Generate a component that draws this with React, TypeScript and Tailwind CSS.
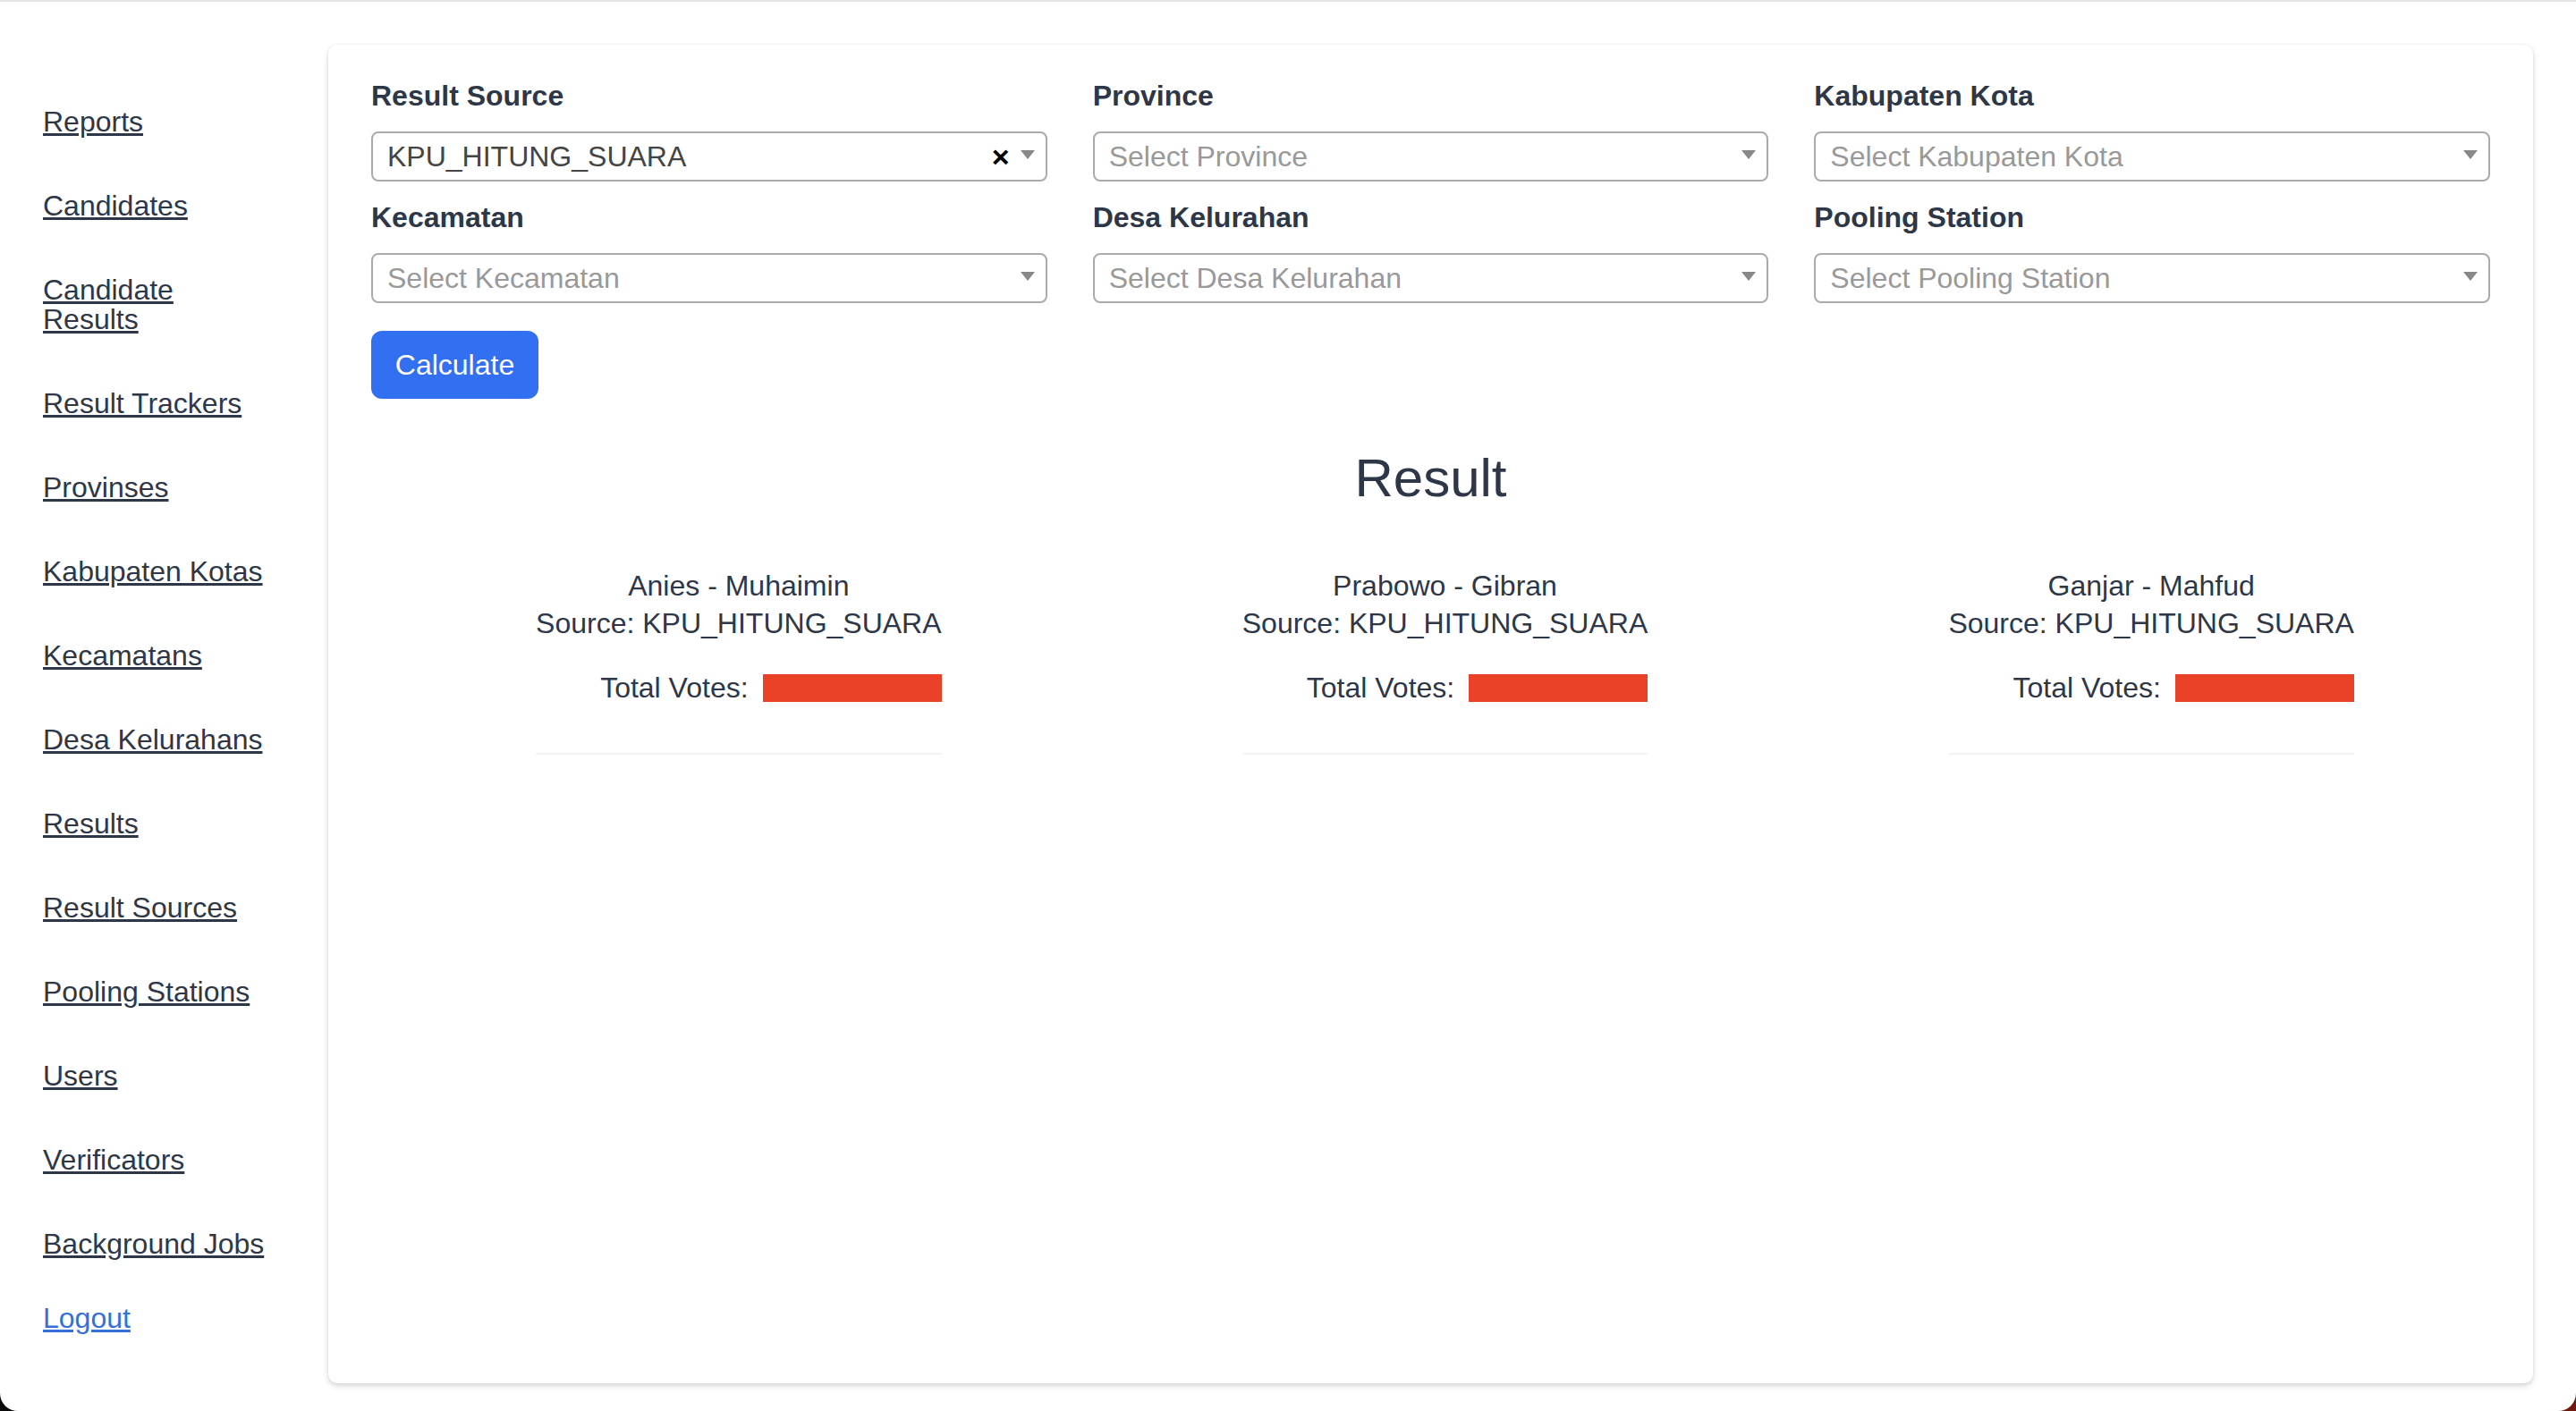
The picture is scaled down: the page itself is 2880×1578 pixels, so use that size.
import React from 'react';

const links = [
  'Reports',
  'Candidates',
  'Candidate Results',
  'Result Trackers',
  'Provinses',
  'Kabupaten Kotas',
  'Kecamatans',
  'Desa Kelurahans',
  'Results',
  'Result Sources',
  'Pooling Stations',
  'Users',
  'Verificators',
  'Background Jobs',
];

const filters = [
  { label: 'Result Source', value: 'KPU_HITUNG_SUARA', placeholder: '' },
  { label: 'Province', value: '', placeholder: 'Select Province' },
  { label: 'Kabupaten Kota', value: '', placeholder: 'Select Kabupaten Kota' },
  { label: 'Kecamatan', value: '', placeholder: 'Select Kecamatan' },
  { label: 'Desa Kelurahan', value: '', placeholder: 'Select Desa Kelurahan' },
  { label: 'Pooling Station', value: '', placeholder: 'Select Pooling Station' },
];

const candidates = ['Anies - Muhaimin', 'Prabowo - Gibran', 'Ganjar - Mahfud'];

function Select({ value, placeholder }: { value: string; placeholder: string }) {
  return (
    <div className="flex h-[56px] items-center rounded-[8px] border-2 border-[#aaaaaa] bg-white">
      <span
        className={
          'flex-1 truncate pl-[16px] text-[32px] leading-[52px] ' +
          (value ? 'text-[#444444]' : 'text-[#999999]')
        }
      >
        {value || placeholder}
      </span>

      {value && (
        <span className="text-[34px] font-bold leading-none text-black">×</span>
      )}

      <span className="flex w-[40px] justify-center">
        <span className="mt-[-4px] h-0 w-0 border-x-[8px] border-t-[10px] border-x-transparent border-t-[#888888]" />
      </span>
    </div>
  );
}

export default function App() {
  return (
    <div
      className="h-[1578px] bg-[linear-gradient(to_right,#0a0a0a,#0a0a0a_50%,#6e1b0e_50%,#6e1b0e)]"
      style={{ fontFamily: '"Liberation Sans", Arial, sans-serif' }}
    >
      <div className="flex h-full rounded-b-[20px] border-t-2 border-[#e4e4e4] bg-white">

        {/* SIDEBAR */}

        <aside className="w-[367px] shrink-0 pl-[48px] pr-[63px] pt-[118px]">
          <nav className="flex flex-col gap-[61px]">
            {links.map((l) => (
              <a
                key={l}
                href="#"
                className="text-[32px] leading-[33px] text-[#2d3748] underline"
              >
                {l}
              </a>
            ))}
            <a
              href="#"
              className="mt-[-11px] text-[32px] leading-[33px] text-[#3570d8] underline"
            >
              Logout
            </a>
          </nav>
        </aside>

        {/* MAIN CARD */}

        <main className="mr-[48px] mt-[48px] h-[1497px] flex-1 rounded-[10px] bg-white px-[48px] pt-[33px] shadow-[0_3px_6px_rgba(0,0,0,0.16),0_0_3px_rgba(0,0,0,0.06)]">

          <div className="grid grid-cols-3 gap-x-[51px] gap-y-[16px]">
            {filters.map((f) => (
              <div key={f.label}>
                <label className="mb-[16px] block text-[32px] font-bold leading-[48px] text-[#2d3748]">
                  {f.label}
                </label>
                <Select value={f.value} placeholder={f.placeholder} />
              </div>
            ))}
          </div>

          <button className="mt-[31px] h-[76px] w-[187px] rounded-[12px] bg-[#3370f1] text-[32px] text-white">
            Calculate
          </button>

          <h2 className="mt-[53px] text-center text-[60px] font-medium leading-[72px] text-[#2d3748]">
            Result
          </h2>

          <div className="ml-[16px] mr-[-16px] mt-[63px] grid grid-cols-3">
            {candidates.map((c) => (
              <div key={c} className="flex justify-center">
                <div className="w-fit border-b-2 border-[#f3f4f6] pb-[52px] text-[32px] leading-[42px] text-[#2d3748]">
                  <div className="text-center">{c}</div>
                  <div className="whitespace-nowrap">Source: KPU_HITUNG_SUARA</div>
                  <div className="mt-[30px] flex items-center justify-end gap-[16px]">
                    <span>Total Votes:</span>
                    <span className="h-[31px] w-[200px] bg-[#ea4229]" />
                  </div>
                </div>
              </div>
            ))}
          </div>

        </main>

      </div>
    </div>
  );
}
